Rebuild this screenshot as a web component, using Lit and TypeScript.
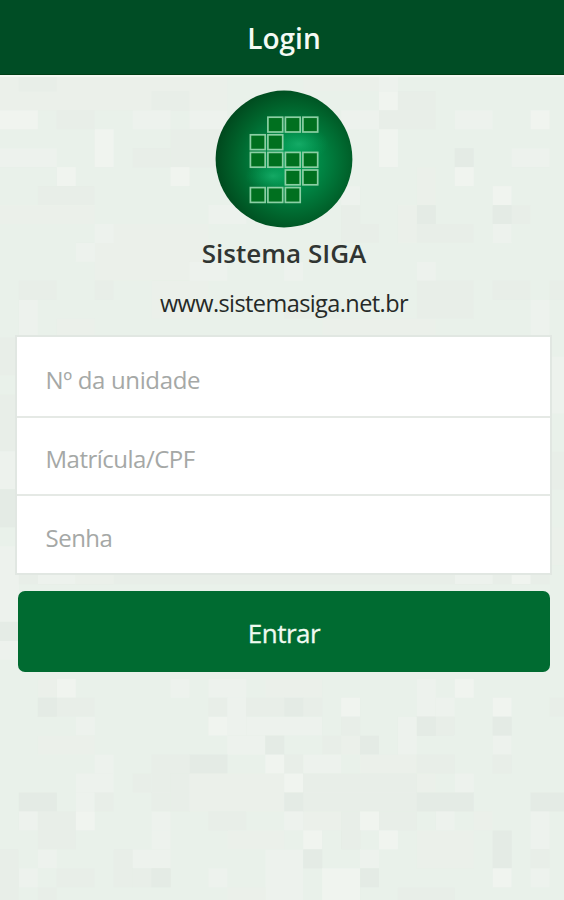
import { LitElement, html, svg, css } from "lit";
import { customElement } from "lit/decorators.js";

// Mosaic tiles: column, row, columns wide, rows tall, shade.
type Tile = [number, number, number, number, string];
const PITCH = 18.95;
const TOP = 72.4;
const SHADES: Record<string, string> = {
  L: "#f1f5f0",
  l: "#edf3ed",
  m: "#ebf0ea",
  d: "#e7eee7",
  D: "#e2eae3",
};

const TILES: Tile[] = [
  [0, 0, 12, 2, "m"], [1, 0, 2, 1, "d"], [8, 1, 2, 1, "d"], [16, 0, 4, 1, "m"], [20, 0, 1, 1, "l"],
  [0, 2, 2, 1, "L"], [3, 2, 2, 1, "d"], [7, 2, 2, 1, "l"], [10, 2, 2, 1, "l"],
  [5, 3, 1, 2, "L"], [9, 3, 3, 2, "d"], [7, 4, 2, 1, "d"], [0, 4, 3, 1, "l"], [3, 5, 1, 1, "L"],
  [9, 5, 1, 1, "L"], [2, 6, 3, 1, "d"], [11, 7, 2, 1, "l"], [0, 7, 5, 1, "m"], [5, 8, 6, 3, "m"],
  [5, 8, 1, 1, "l"], [4, 9, 1, 1, "l"], [1, 11, 2, 1, "d"], [5, 11, 1, 1, "d"], [1, 12, 1, 2, "l"],
  [8, 11, 3, 2, "m"], [3, 13, 2, 1, "m"], [10, 10, 2, 1, "l"],
  [20, 1, 1, 1, "L"], [18, 2, 2, 1, "l"], [20, 2, 1, 1, "d"], [21, 1, 2, 2, "d"], [24, 2, 2, 1, "l"],
  [28, 2, 1, 1, "L"], [20, 3, 1, 2, "L"], [24, 4, 1, 1, "D"], [27, 4, 2, 1, "l"], [24, 5, 1, 1, "L"],
  [22, 5, 1, 2, "m"], [26, 6, 1, 1, "L"], [18, 6, 1, 1, "l"], [22, 7, 1, 1, "D"], [26, 7, 1, 1, "D"],
  [27, 7, 1, 1, "d"], [18, 8, 2, 1, "d"], [18, 7, 1, 1, "d"], [26, 8, 1, 1, "l"], [22, 8, 3, 1, "d"],
  [21, 7, 1, 2, "m"], [15, 10, 1, 1, "l"], [22, 10, 1, 1, "l"], [22, 11, 3, 2, "d"], [26, 11, 2, 1, "d"],
  [28, 12, 1, 2, "l"], [15, 12, 3, 1, "d"], [17, 13, 6, 1, "m"], [29, 11, 1, 1, "d"],
  [0, 14, 1, 2, "d"], [0, 17, 1, 3, "d"], [0, 20, 1, 2, "l"], [0, 22, 1, 2, "D"], [0, 25, 1, 2, "l"],
  [29, 15, 1, 3, "l"], [29, 20, 1, 2, "d"], [29, 24, 1, 2, "m"],
  [1, 26, 28, 1, "d"], [2, 26, 2, 1, "l"], [4, 26, 2, 1, "m"], [24, 26, 2, 1, "l"], [27, 26, 1, 1, "L"],
  [0, 27, 1, 4, "l"], [0, 29, 1, 1, "D"],
  [3, 32, 1, 1, "L"], [2, 32, 1, 1, "m"], [9, 32, 1, 1, "l"], [11, 32, 2, 1, "l"], [14, 32, 3, 1, "m"],
  [22, 32, 1, 2, "l"], [24, 32, 1, 1, "L"], [23, 33, 1, 1, "l"],
  [2, 33, 3, 1, "d"], [2, 33, 1, 1, "D"], [11, 33, 1, 1, "d"], [12, 33, 1, 2, "l"], [13, 33, 2, 1, "d"],
  [15, 33, 1, 1, "D"], [16, 33, 1, 1, "d"], [18, 33, 1, 1, "L"], [26, 33, 1, 1, "L"], [29, 33, 1, 1, "d"],
  [4, 34, 1, 1, "l"], [11, 34, 1, 1, "L"], [13, 34, 4, 1, "l"], [18, 34, 1, 1, "d"], [21, 34, 1, 2, "l"],
  [22, 34, 2, 1, "d"], [22, 34, 1, 1, "D"], [26, 34, 1, 1, "D"],
  [2, 35, 3, 1, "m"], [12, 35, 2, 1, "l"], [14, 35, 1, 1, "D"], [17, 35, 1, 1, "d"], [19, 35, 1, 1, "D"],
  [18, 35, 1, 1, "m"], [26, 35, 1, 1, "l"],
  [5, 36, 1, 1, "l"], [8, 36, 2, 2, "d"], [10, 36, 2, 1, "D"], [14, 36, 1, 1, "L"], [15, 36, 1, 1, "d"],
  [16, 36, 2, 1, "l"], [19, 36, 3, 1, "m"], [22, 36, 2, 1, "d"], [26, 36, 1, 1, "d"],
  [4, 37, 2, 1, "l"], [7, 37, 1, 1, "d"], [9, 37, 1, 2, "d"], [10, 37, 5, 2, "m"], [15, 37, 1, 1, "L"],
  [16, 37, 6, 1, "d"], [22, 37, 1, 1, "m"], [24, 37, 1, 1, "l"],
  [1, 38, 2, 1, "D"], [4, 38, 1, 1, "l"], [5, 38, 1, 1, "d"], [8, 38, 1, 1, "d"], [15, 38, 1, 1, "D"],
  [16, 38, 6, 1, "d"], [22, 38, 3, 1, "D"], [28, 38, 2, 1, "D"],
  [1, 39, 1, 1, "l"], [2, 39, 2, 2, "d"], [4, 39, 1, 1, "L"], [8, 39, 1, 1, "l"], [11, 39, 2, 1, "d"],
  [15, 39, 1, 1, "l"], [16, 39, 2, 1, "m"], [18, 39, 1, 2, "d"], [19, 39, 1, 1, "L"], [20, 39, 2, 1, "d"],
  [23, 39, 1, 1, "l"], [25, 39, 1, 1, "m"], [28, 39, 1, 2, "l"],
  [8, 40, 1, 1, "l"], [12, 40, 3, 1, "m"], [16, 40, 1, 1, "L"], [18, 40, 1, 1, "d"], [20, 40, 1, 1, "L"],
  [22, 40, 3, 2, "m"], [26, 40, 1, 2, "D"],
  [2, 41, 1, 1, "l"], [0, 41, 1, 3, "d"], [6, 41, 1, 2, "d"], [7, 41, 2, 1, "l"], [14, 41, 2, 3, "l"],
  [16, 41, 1, 1, "D"], [19, 41, 1, 1, "l"], [28, 41, 1, 1, "d"],
  [1, 42, 1, 1, "l"], [3, 42, 2, 1, "d"], [7, 42, 2, 1, "d"], [8, 42, 1, 1, "D"], [11, 42, 1, 1, "l"],
  [17, 42, 2, 2, "L"], [19, 42, 1, 1, "D"], [26, 42, 1, 1, "L"], [28, 42, 1, 1, "l"],
  [2, 43, 1, 1, "d"], [12, 43, 2, 1, "m"], [21, 43, 3, 1, "d"],
];

// Logo squares as column, row inside the roundel.
const SQUARES: [number, number][] = [
  [1, 0], [2, 0], [3, 0],
  [0, 1], [1, 1],
  [0, 2], [1, 2], [2, 2], [3, 2],
  [2, 3], [3, 3],
  [0, 4], [1, 4], [2, 4],
];

@customElement("siga-mosaic")
export class SigaMosaic extends LitElement {
  static styles = css`
    :host { display: block; }
    svg { display: block; width: 100%; height: 100%; }
  `;
  render() {
    return html`<svg viewBox="0 0 564 900" aria-hidden="true">
      ${TILES.map(([c, r, w, h, s]) => svg`<rect x=${c * PITCH} y=${TOP + r * PITCH}
        width=${w * PITCH} height=${h * PITCH} fill=${SHADES[s]} fill-opacity="0.8"/>`)}
    </svg>`;
  }
}

@customElement("siga-logo")
export class SigaLogo extends LitElement {
  static styles = css`
    :host { display: block; width: 138px; height: 138px; }
    svg { display: block; }
  `;
  render() {
    return html`<svg width="138" height="138" viewBox="0 0 138 138" role="img" aria-label="SIGA">
      <defs>
        <radialGradient id="g" cx="0.56" cy="0.52" r="0.6">
          <stop offset="0" stop-color="#00a058"/>
          <stop offset="0.35" stop-color="#008745"/>
          <stop offset="0.7" stop-color="#00622b"/>
          <stop offset="1" stop-color="#00421a"/>
        </radialGradient>
        <radialGradient id="s">
          <stop offset="0" stop-color="#22bd78" stop-opacity="0.6"/>
          <stop offset="1" stop-color="#00a058" stop-opacity="0"/>
        </radialGradient>
      </defs>
      <circle cx="69" cy="69" r="68.4" fill="url(#g)"/>
      <ellipse cx="84" cy="54" rx="30" ry="18" fill="url(#s)"/>
      <ellipse cx="58" cy="86" rx="28" ry="16" fill="url(#s)"/>
      ${SQUARES.map(([c, r]) => svg`<rect x=${35.4 + c * 17.5} y=${27.2 + r * 17.6} width="14.8" height="14.8"
        fill="#00701f" stroke="#8bcfa4" stroke-width="1.7"/>`)}
    </svg>`;
  }
}

@customElement("app-root")
export class AppRoot extends LitElement {
  static styles = css`
    :host {
      display: grid;
      grid-template: 900px / 564px;
      background: #e9f1ea;
      font-family: "Open Sans", "Noto Sans", sans-serif;
      overflow: hidden;
    }
    siga-mosaic, .page { grid-area: 1 / 1; }
    .page { z-index: 1; display: flex; flex-direction: column; }
    header {
      box-sizing: border-box;
      height: 77px;
      background: #004d25;
      box-shadow: inset 0 -2px #f4f8f3, inset 0 -3px #003f16;
      text-align: center;
    }
    h1 { margin: 0; padding-left: 4px; font-size: 28px; line-height: 76px; font-weight: 600; color: #f5fbf5; }
    .brand { display: flex; flex-direction: column; align-items: center; padding: 13px 0 0 4px; }
    .brand siga-logo { margin-left: -4px; margin-right: -4px; }
    h2 { margin: 7px 0 0; font-size: 26px; line-height: 36px; font-weight: 600; color: #303532; }
    .site { margin: 14px 0 0; font-size: 23.5px; letter-spacing: -0.58px; line-height: 36px; color: #252927; }
    form { display: flex; flex-direction: column; padding: 14px 12px 0 15px; }
    .fields { border: 2px solid #e1e7e2; background: #fff; display: flex; flex-direction: column; height: 236px; }
    input {
      box-sizing: border-box; flex: 1; min-height: 0; width: 100%; border: 0; outline: 0; margin: 0;
      padding: 7px 28px 0 28.5px; background: none; font: 24px "Open Sans", "Noto Sans", sans-serif;
      letter-spacing: -0.5px;
    }
    input + input { border-top: 2px solid #e5e9e5; padding-top: 5px; }
    input:first-child { letter-spacing: -0.35px; }
    input::placeholder { color: #a5a8a6; opacity: 1; }
    button {
      margin: 16px 2px 0 3px; height: 81px; border: 0; border-radius: 7px; padding: 3px 0 0;
      background: #006b31; color: #effaf0; font: 500 26px "Open Sans", "Noto Sans", sans-serif;
      -webkit-text-stroke: 0.3px #effaf0;
      letter-spacing: -0.5px;
    }
  `;
  render() {
    return html`
      <siga-mosaic></siga-mosaic>
      <div class="page">
        <header><h1>Login</h1></header>
        <div class="brand">
          <siga-logo></siga-logo>
          <h2>Sistema SIGA</h2>
          <p class="site">www.sistemasiga.net.br</p>
        </div>
        <form>
          <div class="fields">
            <input type="text" placeholder="Nº da unidade">
            <input type="text" placeholder="Matrícula/CPF">
            <input type="password" placeholder="Senha">
          </div>
          <button type="button">Entrar</button>
        </form>
      </div>
    `;
  }
}
